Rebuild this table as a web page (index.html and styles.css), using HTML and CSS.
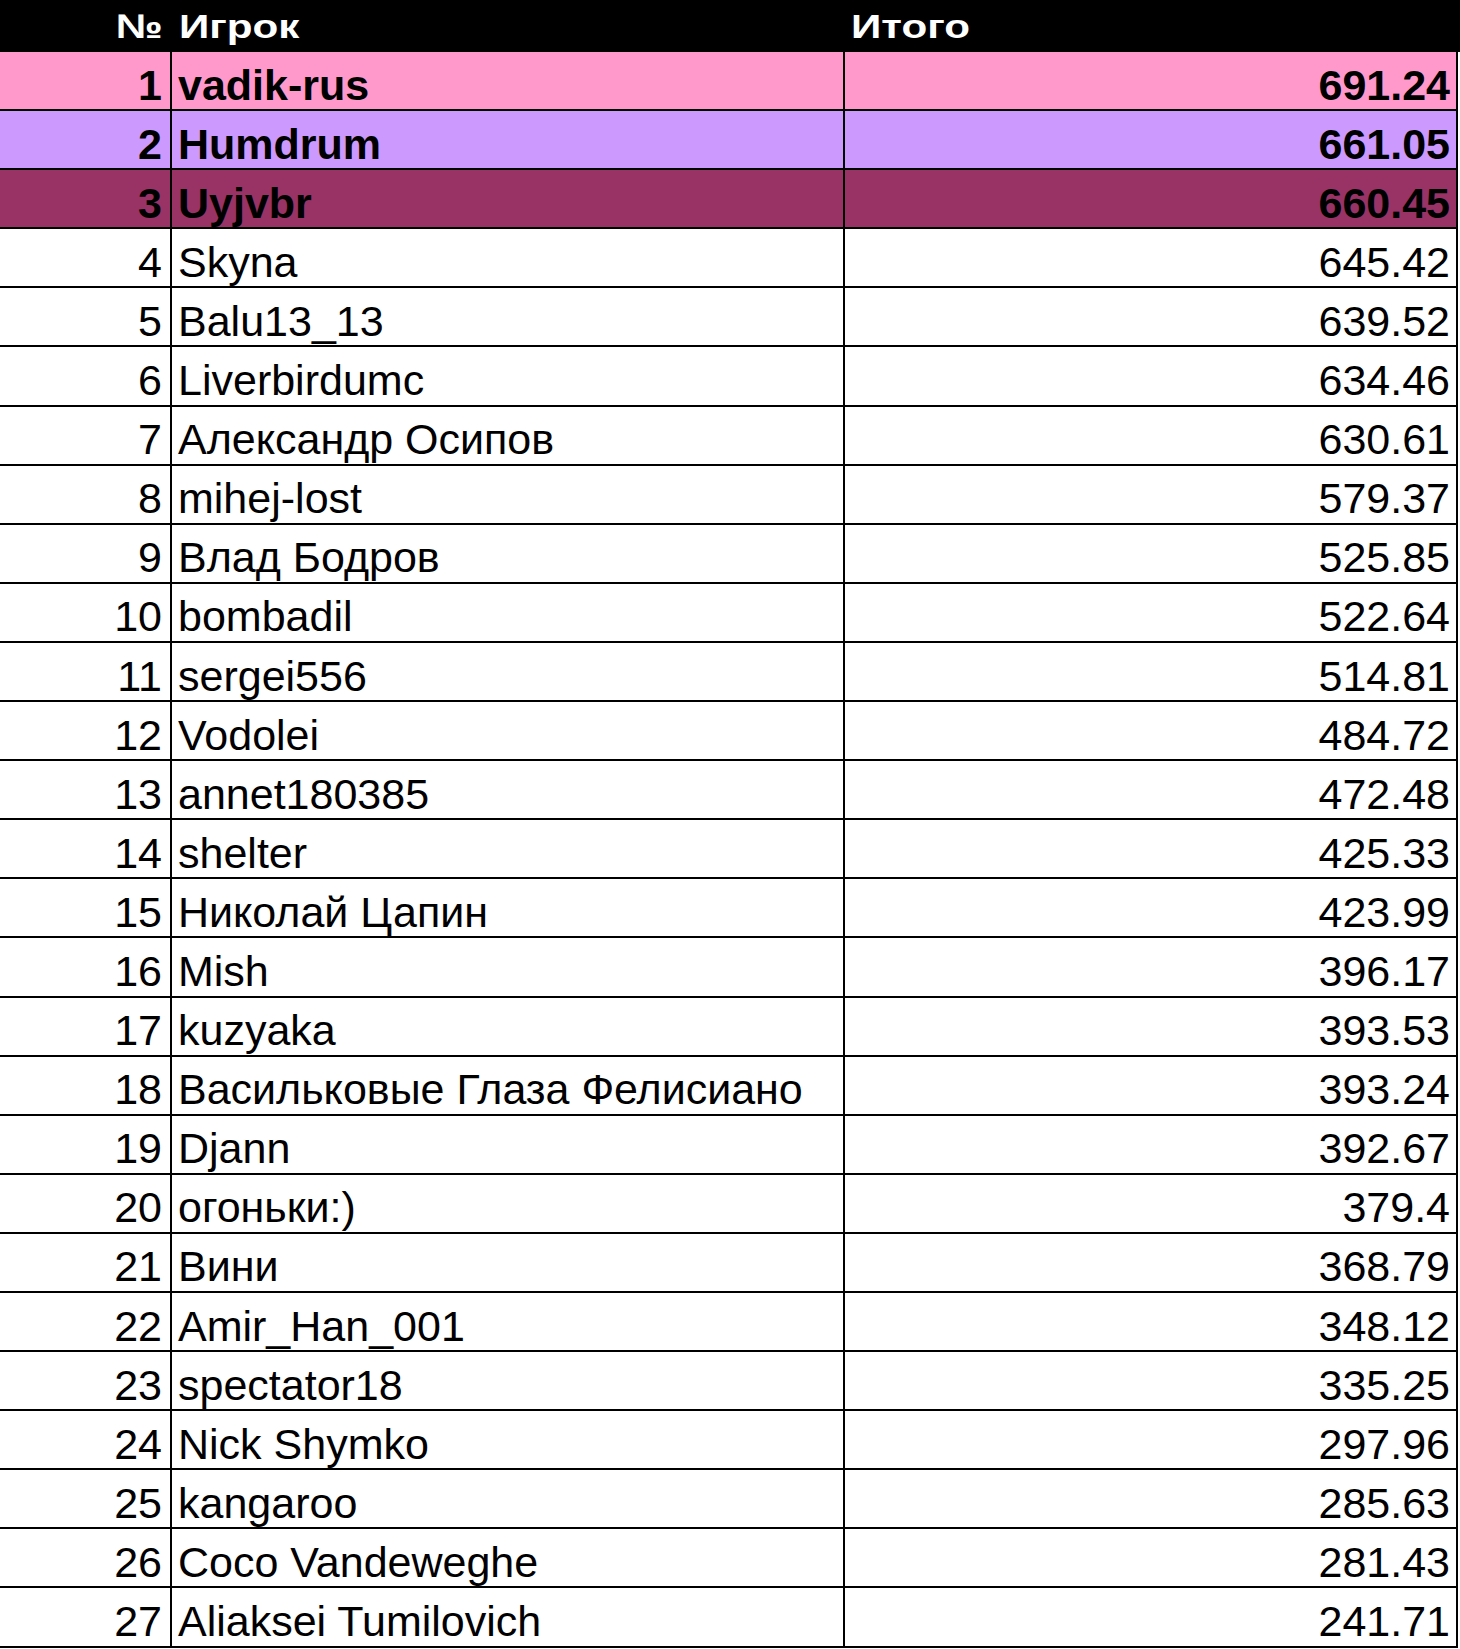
FILE: index.html
```html
<!DOCTYPE html>
<html lang="ru">
<head>
<meta charset="utf-8">
<title>Итого</title>
<link rel="stylesheet" href="styles.css">
</head>
<body>
<div class="sheet">
  <div class="head">
    <div class="hcell hnum"><span class="htext htext-r">№</span></div>
    <div class="hcell hname"><span class="htext">Игрок</span></div>
    <div class="hcell htotal"><span class="htext">Итого</span></div>
  </div>
  <div class="row top top1"><div class="cell num">1</div><div class="cell name">vadik-rus</div><div class="cell total">691.24</div></div>
  <div class="row top top2"><div class="cell num">2</div><div class="cell name">Humdrum</div><div class="cell total">661.05</div></div>
  <div class="row top top3"><div class="cell num">3</div><div class="cell name">Uyjvbr</div><div class="cell total">660.45</div></div>
  <div class="row"><div class="cell num">4</div><div class="cell name">Skyna</div><div class="cell total">645.42</div></div>
  <div class="row"><div class="cell num">5</div><div class="cell name">Balu13_13</div><div class="cell total">639.52</div></div>
  <div class="row"><div class="cell num">6</div><div class="cell name">Liverbirdumc</div><div class="cell total">634.46</div></div>
  <div class="row"><div class="cell num">7</div><div class="cell name">Александр Осипов</div><div class="cell total">630.61</div></div>
  <div class="row"><div class="cell num">8</div><div class="cell name">mihej-lost</div><div class="cell total">579.37</div></div>
  <div class="row"><div class="cell num">9</div><div class="cell name">Влад Бодров</div><div class="cell total">525.85</div></div>
  <div class="row"><div class="cell num">10</div><div class="cell name">bombadil</div><div class="cell total">522.64</div></div>
  <div class="row"><div class="cell num">11</div><div class="cell name">sergei556</div><div class="cell total">514.81</div></div>
  <div class="row"><div class="cell num">12</div><div class="cell name">Vodolei</div><div class="cell total">484.72</div></div>
  <div class="row"><div class="cell num">13</div><div class="cell name">annet180385</div><div class="cell total">472.48</div></div>
  <div class="row"><div class="cell num">14</div><div class="cell name">shelter</div><div class="cell total">425.33</div></div>
  <div class="row"><div class="cell num">15</div><div class="cell name">Николай Цапин</div><div class="cell total">423.99</div></div>
  <div class="row"><div class="cell num">16</div><div class="cell name">Mish</div><div class="cell total">396.17</div></div>
  <div class="row"><div class="cell num">17</div><div class="cell name">kuzyaka</div><div class="cell total">393.53</div></div>
  <div class="row"><div class="cell num">18</div><div class="cell name">Васильковые Глаза Фелисиано</div><div class="cell total">393.24</div></div>
  <div class="row"><div class="cell num">19</div><div class="cell name">Djann</div><div class="cell total">392.67</div></div>
  <div class="row"><div class="cell num">20</div><div class="cell name">огоньки:)</div><div class="cell total">379.4</div></div>
  <div class="row"><div class="cell num">21</div><div class="cell name">Вини</div><div class="cell total">368.79</div></div>
  <div class="row"><div class="cell num">22</div><div class="cell name">Amir_Han_001</div><div class="cell total">348.12</div></div>
  <div class="row"><div class="cell num">23</div><div class="cell name">spectator18</div><div class="cell total">335.25</div></div>
  <div class="row"><div class="cell num">24</div><div class="cell name">Nick Shymko</div><div class="cell total">297.96</div></div>
  <div class="row"><div class="cell num">25</div><div class="cell name">kangaroo</div><div class="cell total">285.63</div></div>
  <div class="row"><div class="cell num">26</div><div class="cell name">Coco Vandeweghe</div><div class="cell total">281.43</div></div>
  <div class="row"><div class="cell num">27</div><div class="cell name">Aliaksei Tumilovich</div><div class="cell total">241.71</div></div>
</div>
</body>
</html>
```
FILE: styles.css
```css
html, body {
  margin: 0;
  padding: 0;
  background: #ffffff;
}

body {
  font-family: "Liberation Sans", Arial, sans-serif;
  color: #000000;
  width: 1460px;
  overflow: hidden;
}

.sheet {
  width: 1460px;
}

.head {
  display: grid;
  grid-template-columns: 172px 673px 615px;
  height: 52px;
  background: #000000;
  color: #ffffff;
  font-weight: bold;
  font-size: 34px;
  line-height: 34px;
}

.hcell {
  display: flex;
  align-items: flex-end;
  padding-bottom: 9px;
  box-sizing: border-box;
}

.hnum {
  justify-content: flex-end;
  padding-right: 9px;
}

.hname {
  padding-left: 7px;
}

.htotal {
  padding-left: 6px;
}

.htext {
  display: inline-block;
  transform: scaleX(1.24);
  transform-origin: left bottom;
}

.htext-r {
  transform-origin: right bottom;
}

.row {
  display: grid;
  grid-template-columns: 172px 673px 613px;
  height: 59.1px;
  font-size: 43px;
  line-height: 43px;
}

.cell {
  box-sizing: border-box;
  border-right: 2px solid #000000;
  border-bottom: 2.5px solid #000000;
  display: flex;
  align-items: flex-end;
  padding-bottom: 2.5px;
  white-space: nowrap;
  overflow: hidden;
}

.num {
  justify-content: flex-end;
  padding-right: 8px;
}

.name {
  padding-left: 6px;
}

.total {
  justify-content: flex-end;
  padding-right: 6px;
}

.top {
  font-weight: bold;
}

.top1 .cell {
  background: #ff99cc;
}

.top2 .cell {
  background: #cc99ff;
}

.top3 .cell {
  background: #993366;
}
```
